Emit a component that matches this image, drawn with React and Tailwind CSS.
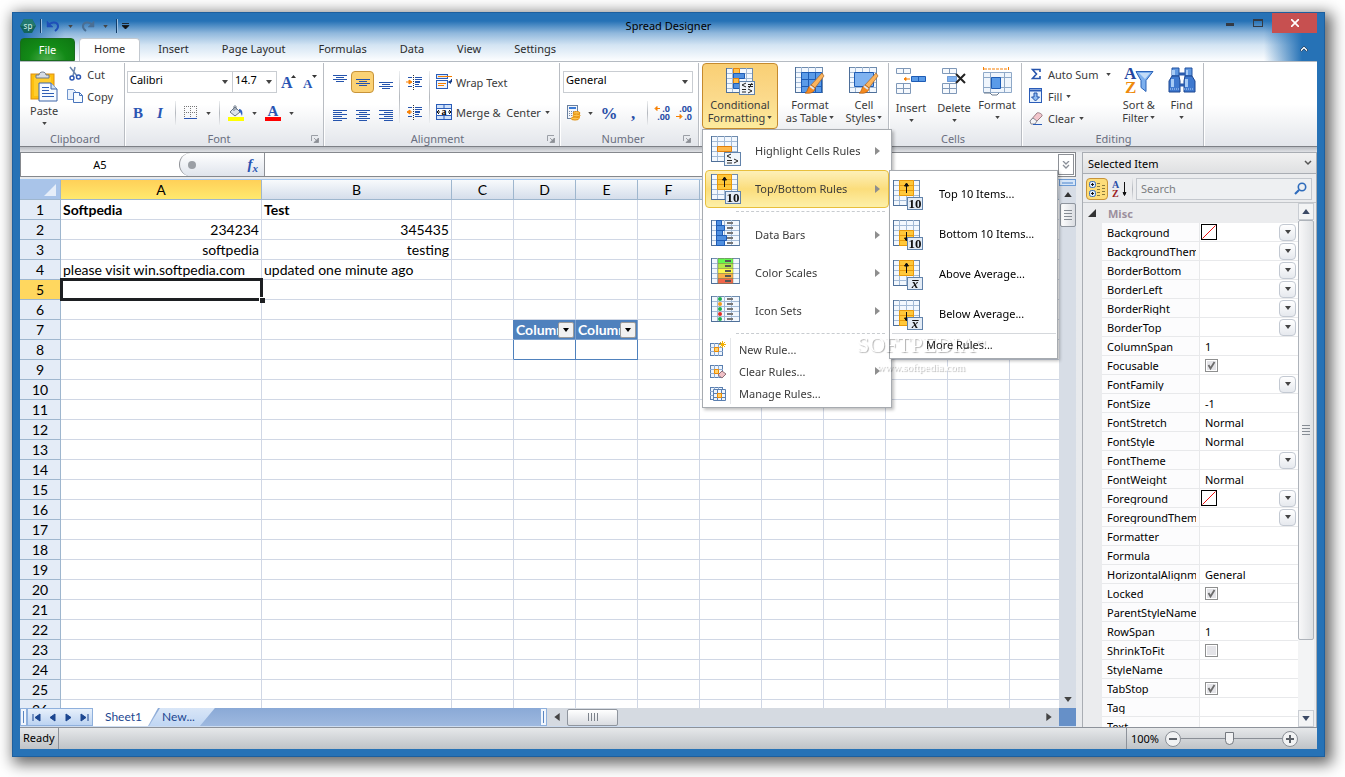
const Caret = ({ className = 'w-[5px] h-[3px] text-[#444]' }) => (
  <svg viewBox="0 0 6 4" className={`shrink-0 ${className}`} aria-hidden="true"><path d="M0 0h6L3 4z" fill="currentColor" /></svg>
);

const Sep = () => <span className="h-6 w-px bg-gradient-to-b from-[#eceef0] via-[#b4b8be] to-[#eceef0]" />;

/* ---------- quick access icons ---------- */

const Logo = () => (
  <svg viewBox="0 0 16 16" className="size-4">
    <path d="M4 1h8l4 7-4 7H4L0 8z" fill="#14655c" />
    <path d="M4 1h8l4 7H0z" fill="#22796f" />
    <text x="8" y="10.500" textAnchor="middle" fontSize="8" fill="#d5efe9">sp</text>
  </svg>
);

const Undo = ({ redo }) => (
  <svg viewBox="0 0 14 12" className="h-3 w-3.5">
    <g transform={redo ? 'translate(14 0) scale(-1 1)' : undefined} fill="none" stroke={redo ? '#4a6f94' : '#1f4fb8'}>
      <path d="M2 6C4 2 11 1 12 5.500c.5 2.500-1 4-3 5.500" strokeWidth="2" />
      <path d="M1 1v6h6z" fill={redo ? '#4a6f94' : '#1f4fb8'} strokeWidth=".5" />
    </g>
  </svg>
);

/* ---------- clipboard icons ---------- */

const PasteIcon = () => (
  <svg viewBox="0 0 28 31" className="h-[31px] w-7">
    <rect x="1" y="3" width="23" height="25" fill="#fdbf0f" stroke="#dd8f12" />
    <rect x="4" y="6" width="17" height="19" fill="#ffcd2e" />
    <path d="M6 7V4h3c0-4 7-4 7 0h3v3z" fill="#d6dde6" stroke="#6c7889" />
    <path d="M9 12h12l6 6v12H9z" fill="#f7fbff" stroke="#3c65a8" />
    <path d="M21 12v6h6" fill="#cfe0f5" stroke="#3c65a8" />
    <path d="M12 16.500h7M12 19.500h7M12 22.500h12M12 25.500h12" stroke="#2f5fb5" />
  </svg>
);

const CutIcon = () => (
  <svg viewBox="0 0 14 16" className="h-4 w-3.5" fill="none">
    <path d="M2 1l7 9M7 1L5 10" stroke="#6d88b0" strokeWidth="1.500" />
    <circle cx="4" cy="12" r="2" stroke="#2c57b4" strokeWidth="1.500" />
    <circle cx="10.500" cy="11" r="2" stroke="#2c57b4" strokeWidth="1.500" />
  </svg>
);

const CopyIcon = () => (
  <svg viewBox="0 0 16 14" className="h-3.5 w-4" stroke="#6f94cc">
    <path d="M.5.5h6l2 2v8h-8z" fill="#e9f1fc" />
    <path d="M6.500 3.500h6l3 3v7h-9z" fill="#f7fbff" stroke="#4673bb" />
    <path d="M12.500 3.500v3h3" fill="none" stroke="#4673bb" />
  </svg>
);

/* ---------- font icons ---------- */

const SizeIcon = ({ down }) => (
  <svg viewBox="0 0 16 16" className="size-4 overflow-visible">
    <text x="0" y="14" fontSize={down ? 13 : 16} fontWeight="bold" fill="#2a55b3" fontFamily="Liberation Serif, serif">A</text>
    <path d={down ? 'M9 1h5l-2.500 3z' : 'M10 4h5l-2.500-3z'} fill="#333" />
  </svg>
);

const BordersIcon = () => (
  <svg viewBox="0 0 14 14" className="size-3.5">
    <path d="M.5 0v12M6.500 0v12M12.500 0v12M0 .5h13M0 6.500h13" stroke="#777" strokeDasharray="1 1" />
    <path d="M0 12.500h13" stroke="#2a55b3" />
  </svg>
);

const FillColorIcon = () => (
  <svg viewBox="0 0 16 16" className="size-4">
    <path d="M2 7l5-5 5 5-5 4z" fill="#dce3ec" stroke="#6a7686" />
    <path d="M6 6V1.500c0-1 2-1 2 0V5" fill="none" stroke="#6a7686" />
    <path d="M11 4c3 0 4 3 3 7-1-2-1-3-3-5z" fill="#2f62c4" />
    <path d="M0 12h16v4H0z" fill="#ff0" />
  </svg>
);

const FontColorIcon = () => (
  <svg viewBox="0 0 16 16" className="size-4">
    <text x="8" y="11" textAnchor="middle" fontSize="15" fontWeight="bold" fill="#2a55b3" fontFamily="Liberation Serif, serif">A</text>
    <path d="M0 12h16v4H0z" fill="red" />
  </svg>
);

/* ---------- alignment icons ---------- */

const lineSets = {
  top: 'M0 1.500h14M3 3.500h8M0 5.500h14M3 7.500h8',
  middle: 'M0 5.500h14M3 7.500h8M0 9.500h14M3 11.500h8',
  bottom: 'M0 8.500h14M3 10.500h8M0 12.500h14M3 14.500h8',
  left: 'M0 2.500h14M0 4.500h9M0 6.500h14M0 8.500h9M0 10.500h14M0 12.500h9',
  center: 'M0 2.500h14M3 4.500h8M0 6.500h14M3 8.500h8M0 10.500h14M3 12.500h8',
  right: 'M0 2.500h14M5 4.500h9M0 6.500h14M5 8.500h9M0 10.500h14M5 12.500h9',
};

const LinesIcon = ({ kind }) => (
  <svg viewBox="0 0 14 16" className="h-4 w-3.5"><path d={lineSets[kind]} stroke="#2554ad" /></svg>
);

const IndentIcon = ({ out }) => (
  <svg viewBox="0 0 17 16" className="h-4 w-[17px]">
    <path d="M2 3.500h4M9 3.500h7M9 5.500h7M9 10.500h4M2 12.500h4M9 12.500h7" stroke="#2554ad" />
    <path d="M9 8h5" stroke="#2554ad" strokeWidth="2" />
    <path d="M7.500 1v15" stroke="#333" strokeDasharray="1 1" />
    <path d={out ? 'M6 8H3M4 6L1 8l3 2z' : 'M0 8h4M3 6l3 2-3 2z'} fill="#f77f00" stroke="#f77f00" />
  </svg>
);

const WrapIcon = () => (
  <svg viewBox="0 0 16 16" className="size-4">
    <rect x=".5" y=".5" width="11" height="4" fill="#dceafc" stroke="#2a5cb8" />
    <path d="M2 2.500h14" stroke="#f77f00" />
    <rect x=".5" y="6.500" width="11" height="8" fill="#eef5ff" stroke="#2a5cb8" />
    <path d="M2 9.500h8M2 11.500h6" stroke="#f77f00" />
    <path d="M15.500 5v3h-3" fill="none" stroke="#173f8a" />
    <path d="M15 6v4l-3-2z" fill="#173f8a" />
  </svg>
);

const MergeIcon = () => (
  <svg viewBox="0 0 16 16" className="size-4">
    <rect x=".5" y=".5" width="15" height="15" fill="#fff" stroke="#2a5cb8" />
    <path d="M1 1h14v3H1zM1 12h14v3H1z" fill="#cfe1fa" />
    <path d="M0 4.500h16M0 11.500h16M8 0v4M8 12v4" stroke="#2a5cb8" />
    <path d="M1 8h3M15 8h-3M3 6L1 8l2 2M13 6l2 2-2 2" fill="none" stroke="#111" />
    <text x="8" y="11" textAnchor="middle" fontSize="10" fontWeight="bold" fontFamily="Liberation Serif, serif">a</text>
  </svg>
);

/* ---------- number icons ---------- */

const CurrencyIcon = () => (
  <svg viewBox="0 0 16 16" className="size-4">
    <rect x="1.500" y=".5" width="10" height="13" fill="#f3f6fb" stroke="#69809f" />
    <path d="M3 2h7v2H3z" fill="#3b7bd6" />
    <path d="M3 6.500h7M3 8.500h7M3 10.500h7" stroke="#7c8da5" strokeDasharray="1 1" />
    <path d="M7 8h7v5H7z" fill="#f9a825" />
    <ellipse cx="10.500" cy="8" rx="3.500" ry="1.500" fill="#ffc34d" stroke="#e0900f" />
    <ellipse cx="10.500" cy="10.500" rx="3.500" ry="1.500" fill="#ffc34d" stroke="#e0900f" />
    <ellipse cx="9" cy="13.500" rx="4" ry="1.500" fill="#ffc34d" stroke="#e0900f" />
  </svg>
);

const DecimalIcon = ({ less }) => (
  <svg viewBox="0 0 16 16" className="size-4 overflow-visible" fontSize="9" fontWeight="bold" fill="#2a4fa8" fontFamily="Noto Sans, sans-serif">
    <text x="16" y="7" textAnchor="end">{less ? '.00' : '.0'}</text>
    <text x="16" y="15" textAnchor="end">{less ? '.0' : '.00'}</text>
    <path d={less ? 'M0 11.500h4M4 9.500l2 2-2 2z' : 'M6 3.500H2M3 1.500l-2 2 2 2z'} fill="#f77f00" stroke="#f77f00" />
  </svg>
);

/* ---------- sheet-shaped icons ---------- */

const Sheet = ({ w = 27, h = 25 }) => (
  <g>
    <rect x=".5" y=".5" width={w} height={h} fill="#f3f8fe" stroke="#6f8cae" />
    <path d={`M0 5.500h${w}M0 10.500h${w}M0 15.500h${w}M0 20.500h${w}M6.500 0v${h}M13.500 0v${h}M20.500 0v${h}`} stroke="#a3bad6" />
    <path d={`M.5 0v${h + 0.5}h${w}`} fill="none" stroke="#4e6f99" />
  </g>
);

const Badge = ({ children, italic }) => (
  <g>
    <rect x="14.500" y="17.500" width="15" height="12" fill="#e4ecf6" stroke="#6283ab" />
    <text x="22" y="28" textAnchor="middle" fontSize="13" fontWeight="bold" fontStyle={italic ? 'italic' : 'normal'} fill="#111" fontFamily="Liberation Serif, serif">{children}</text>
  </g>
);

const Operators = () => (
  <g>
    <rect x="13.500" y="16.500" width="16" height="13" fill="#f1f5fa" stroke="#6283ab" />
    <path d="M20 18l-4 2 4 2M16 24.500h5M16 27h5M23 23l4 2-4 2" fill="none" stroke="#222" />
  </g>
);

const Brush = () => (
  <g>
    <path d="M27 6l2 3-9 12-4-3z" fill="#fbb45c" stroke="#a6642a" strokeWidth=".7" />
    <path d="M16 18l4 3c0 4-4 6-10 5 3-1 2-6 6-8z" fill="#f58a1f" stroke="#a85812" strokeWidth=".7" />
    <path d="M15 19l4 3" stroke="#dfe5ec" strokeWidth="2" />
  </g>
);

const Icon30 = ({ children }) => <svg viewBox="0 0 30 30" className="size-[30px] shrink-0">{children}</svg>;

const CondFormatIcon = () => (
  <Icon30>
    <g transform="translate(1 1)">
      <Sheet w={26} h={24} />
      <path d="M7.500.5h6v5h-6z" fill="#ffc04d" stroke="#e8860a" />
      <path d="M7.500 5.500h11v5h-11z" fill="#4f8fe0" stroke="#1e5cb5" />
      <path d="M7.500 10.500h5v5h-5z" fill="#ffc04d" stroke="#e8860a" />
      <path d="M7.500 15.500h6v5h-6z" fill="#4f8fe0" stroke="#1e5cb5" />
      <rect x="13.500" y="13.500" width="15" height="13" fill="#f1f5fa" stroke="#6283ab" />
      <path d="M20 15l-4 2 4 2M16 21.500h4M16 24h4M22 16.500h5M22 18.500h5M26 15l-3 5M22 21l4 2-4 2" fill="none" stroke="#222" />
    </g>
  </Icon30>
);

const FormatTableIcon = () => (
  <Icon30>
    <Sheet w={27} h={25} />
    <path d="M6.500 5.500h20v20h-20z" fill="#5a9be8" stroke="#1e5cb5" />
    <path d="M7 12.500h20M7 19.500h20M13.500 5v20M20.500 5v20" stroke="#1e5cb5" />
    <Brush />
  </Icon30>
);

const CellStylesIcon = () => (
  <Icon30>
    <Sheet w={27} h={25} />
    <path d="M5.500 5.500h19v14h-19z" fill="#7fb2f0" stroke="#1e5cb5" />
    <Brush />
  </Icon30>
);

const CellBox = ({ y }) => (
  <path d={`M.5 ${y}h14v5h-14zM7.500 ${y}v5`} fill="#f6f9fd" stroke="#7f98b8" />
);

const InsertIcon = () => (
  <Icon30>
    <CellBox y={1.5} />
    <path d="M.5 16.500h14v10h-14zM7.500 16.500v10M.5 21.500h14" fill="#f6f9fd" stroke="#7f98b8" />
    <path d="M15.500 9.500h14v5h-14zM22.500 9.500v5" fill="#5a9be8" stroke="#1e5cb5" />
    <path d="M14 12H9M10 10.500L8 12l2 1.500z" fill="#f77f00" stroke="#f77f00" />
  </Icon30>
);

const DeleteIcon = () => (
  <Icon30>
    <g transform="translate(3 0)">
      <CellBox y={1.5} />
      <path d="M.5 16.500h14v10h-14zM7.500 16.500v10M.5 21.500h14" fill="#f6f9fd" stroke="#7f98b8" />
      <path d="M5.500 9.500h9v5h-9z" fill="#7fb2f0" stroke="#1e5cb5" strokeDasharray="1 1" />
      <path d="M14 7l9 9M23 7l-9 9" stroke="#222" strokeWidth="2" />
    </g>
  </Icon30>
);

const FormatIcon = () => (
  <Icon30>
    <path d="M1.500 0v4M26.500 0v4M2 2h25" stroke="#f77f00" strokeDasharray="3 1" />
    <path d="M1.500 5.500h28v20h-28zM2 10.500h27M2 20.500h27M8.500 6v20M22.500 6v20" fill="#eff5fc" stroke="#8fa9c8" />
    <path d="M9.500 10.500h9v11h-9z" fill="#5a9be8" stroke="#1e5cb5" />
    <path d="M2 26h6l2 2h5l2-2" fill="#fff" stroke="#68788c" />
  </Icon30>
);

/* ---------- editing icons ---------- */

const SumIcon = () => (
  <svg viewBox="0 0 14 14" className="size-3.5"><path d="M11 5V2.500H3.500l4 4.500-4 4.500H11V9" fill="none" stroke="#2554ad" strokeWidth="1.600" /></svg>
);

const FillIcon = () => (
  <svg viewBox="0 0 14 16" className="h-4 w-3.5">
    <rect x=".5" y=".5" width="12" height="14" fill="#e5f0fd" stroke="#2a5cb8" />
    <path d="M0 2.500h13" stroke="#2a5cb8" strokeWidth="2" />
    <path d="M5 5h3v4h2.500l-4 4-4-4H5z" fill="#8fbcf3" stroke="#1e50a8" />
  </svg>
);

const EraserIcon = () => (
  <svg viewBox="0 0 14 14" className="size-3.5">
    <path d="M1 10l7-8c1-1 6 1 5 3l-7 7H2z" fill="#f2c6cc" stroke="#9a7d84" />
    <path d="M1 10l3-3 4 3-2 3H2z" fill="#f4f4f6" stroke="#8b8b95" />
    <path d="M4 13.500h9" stroke="#2a5cb8" />
  </svg>
);

const SortFilterIcon = () => (
  <Icon30>
    <path d="M12 4.500h17l-7 9v11l-5-4v-7z" fill="#7db0ee" stroke="#2a62b8" />
    <path d="M15 6h11l-5 6z" fill="#c3dcf8" />
    <g fontFamily="Liberation Serif, serif" fontWeight="bold" fontSize="17">
      <text x="0" y="12" fill="#2346a0">A</text>
      <text x="1" y="26" fill="#ee8a0c">Z</text>
    </g>
  </Icon30>
);

const FindIcon = () => (
  <Icon30>
    <path d="M5 1h7v8H5zM18 1h7v8h-7z" fill="#5f97e0" stroke="#20509f" />
    <path d="M5 9h7l1 5v11H2V14zM18 9h7l3 5v11H17V14z" fill="#3f79cf" stroke="#1d4690" />
    <path d="M12 7h6M13 18h4" stroke="#2b5cae" strokeWidth="3" />
    <path d="M5 3h3v5H5zM19 3h2v5h-2zM4 12h3v8H4zM18 12h3v8h-3z" fill="#a7cbf5" />
    <path d="M3 22h10M17 22h10" stroke="#bcd6f6" strokeDasharray="1 1" />
  </Icon30>
);

/* ---------- menu icons ---------- */

const HighlightIcon = () => (
  <Icon30><Sheet w={26} h={25} /><path d="M6.500 10.500h14v5h-14z" fill="#ffb84a" stroke="#e07f0b" /><Operators /></Icon30>
);

const RankIcon = ({ down, avg }) => (
  <Icon30>
    <Sheet w={26} h={25} />
    <g transform={down ? 'translate(0 10)' : undefined}>
      <path d="M6.500 .5h14v15h-14zM6.500 5.500h14M6.500 10.500h14" fill="#ffc83a" stroke="#e89a0c" />
      <path d={down ? 'M13.500 2v9M11.500 8l2 3 2-3z' : 'M13.500 13V4M11.500 6l2-3 2 3z'} fill="#111" stroke="#111" />
    </g>
    <Badge italic={avg}>{avg ? 'x̅' : '10'}</Badge>
  </Icon30>
);

const marks = 'M16 3h6M16 8h6M16 13h6M16 18h6M16 23h6';

const DataBarsIcon = () => (
  <Icon30>
    <Sheet w={28} h={25} />
    <path d="M5.500.5h5v5h-5zM5.500 5.500h8v5h-8zM5.500 10.500h6v5h-6zM5.500 15.500h10v5h-10zM5.500 20.500h8v5h-8z" fill="#4f8fe0" stroke="#1e5cb5" />
    <path d={marks} stroke="#777" strokeWidth="2" />
  </Icon30>
);

const scaleColors = ['#62f84e', '#b5e84b', '#fbf94d', '#fbb04a', '#f2664b'];

const ColorScalesIcon = () => (
  <Icon30>
    <Sheet w={28} h={25} />
    {scaleColors.map((c, i) => <rect key={c} x="7" y={0.5 + i * 5} width="15" height="5" fill={c} stroke="#7a7a3a" strokeWidth=".4" />)}
    <path d="M14 3h6M14 8h6M14 13h6M14 18h6M14 23h6" stroke="#555" strokeWidth="2" />
  </Icon30>
);

const dotColors = ['#1fae4b', '#f59a1d', '#1fae4b', '#e42a22', '#1fae4b'];

const IconSetsIcon = () => (
  <Icon30>
    <Sheet w={28} h={25} />
    {dotColors.map((c, i) => <circle key={i} cx="9" cy={3 + i * 5} r="2" fill={c} />)}
    <path d={marks} stroke="#777" strokeWidth="2" />
  </Icon30>
);

const SmallRuleIcon = ({ kind }) => (
  <svg viewBox="0 0 16 16" className="size-4 shrink-0">
    <rect x=".5" y="2.500" width="12" height="12" fill="#eef5fd" stroke="#5a7fb0" />
    <path d="M0 6.500h13M0 10.500h13M4.500 2v13M8.500 2v13" stroke="#8fabd0" />
    <path d="M4.500 6.500h4v4h-4z" fill="#ffd36b" stroke="#f08a00" />
    {kind === 'new' && <path d="M12.500 0v7M9 3.500h7M10 1l5 5M15 1l-5 5" stroke="#f5b100" />}
    {kind === 'clear' && <path d="M8 12l4-4 4 3-4 4z" fill="#f0c0c6" stroke="#8d6f77" />}
    {kind === 'manage' && <path d="M3.500 4.500h12v11h-12zM3 8.500h12M3 12.500h12M7.500 4v11M11.500 4v11" fill="#eef5fd" stroke="#5a7fb0" />}
    {kind === 'manage' && <path d="M7.500 8.500h4v4h-4z" fill="#ffd36b" stroke="#f08a00" />}
  </svg>
);

/* ---------- ribbon building blocks ---------- */

function Group({ title, launcher, className = '', children }) {
  return (
    <section className={`flex shrink-0 flex-col border-r border-[#b9bdc3] shadow-[1px_0_0_#fff] ${className}`}>
      <div className="flex flex-1">{children}</div>
      <div className="flex h-[15px] items-center pr-1 text-[#6a6f80]">
        <h2 className="flex-1 text-center">{title}</h2>
        {launcher && (
          <button aria-label={`${title} options`}>
            <svg viewBox="0 0 8 8" className="size-2"><path d="M.5 6V.5H7" fill="none" stroke="#9b9fa6" /><path d="M3 3l3 3M7.500 3v4.500H3z" fill="#8b8f96" stroke="#8b8f96" strokeWidth=".8" /></svg>
          </button>
        )}
      </div>
    </section>
  );
}

function BigButton({ icon, lines, caretBelow, className = '' }) {
  return (
    <button className={`flex flex-col items-center ${className}`}>
      {icon}
      {lines.map((line, i) => (
        <span key={line} className="flex h-[13px] items-center gap-0.5 whitespace-nowrap">
          {line}
          {!caretBelow && i === lines.length - 1 && <Caret />}
        </span>
      ))}
      {caretBelow && <span className="flex h-[13px] items-center"><Caret /></span>}
    </button>
  );
}

function SmallButton({ icon, label, caret }) {
  return (
    <button className="flex h-[22px] items-center gap-1 whitespace-nowrap">
      <span className="flex w-4 justify-center">{icon}</span>
      {label}
      {caret && <Caret />}
    </button>
  );
}

function Combo({ label, value, className = '' }) {
  return (
    <div className={`relative h-[22px] border border-[#c9cdd2] bg-white ${className}`}>
      <select aria-label={label} className="block h-3.5 w-full appearance-none bg-transparent pl-0.5 text-black outline-none">
        <option>{value}</option>
      </select>
      <Caret className="pointer-events-none absolute right-1 top-2 h-1 w-1.5 text-[#444]" />
    </div>
  );
}

const tool = 'flex h-[22px] items-center justify-center';

/* ---------- conditional formatting menu ---------- */

const Arrow = () => <svg viewBox="0 0 5 8" className="h-2 w-[5px]"><path d="M0 0l5 4-5 4z" fill="#8e8e8e" /></svg>;

const subItems = [
  ['Top 10 Items...', <RankIcon />],
  ['Bottom 10 Items...', <RankIcon down />],
  ['Above Average...', <RankIcon avg />],
  ['Below Average...', <RankIcon down avg />],
];

function SubMenu() {
  return (
    <div role="menu" className="absolute left-full top-0 w-[169px] border border-[#a7abb0] bg-white pt-0.5 text-black shadow-[2px_2px_3px_rgba(0,0,0,0.25)]">
      {subItems.map(([label, icon]) => (
        <button key={label} role="menuitem" className="flex h-10 w-full items-center gap-4 whitespace-nowrap pl-[3px] [&>svg]:mt-1">{icon}{label}</button>
      ))}
      <button role="menuitem" className="mx-0.5 block h-[25px] w-[164px] border-t border-[#d5d8dc] pb-1 pl-[34px] text-left text-[#222]">More Rules...</button>
    </div>
  );
}

function MenuItem({ label, icon, active, children }) {
  return (
    <div className="relative">
      <button role="menuitem" className={`flex h-[38px] w-full items-center rounded-sm border pb-px pl-[5px] pr-2 ${active ? 'border-[#e8bf3c] bg-gradient-to-b from-[#fdf0b8] via-[#fbdd7b] to-[#fdf0a8]' : 'border-transparent'}`}>
        {icon}
        <span className="ml-3.5 flex-1 whitespace-nowrap text-left">{label}</span>
        <Arrow />
      </button>
      {children}
    </div>
  );
}

const MenuRule = () => (
  <div className="flex h-2 pl-[23px] pr-1">
    <div className="mt-[3px] ml-2 flex-1 border-t border-dashed border-[#c8ccd0]" />
  </div>
);

function FormattingMenu() {
  return (
    <div role="menu" className="absolute left-0 top-full w-[190px] border border-[#a7abb0] bg-white px-0.5 pb-[3px] pt-0.5 text-[#3b3b3b] shadow-[2px_2px_3px_rgba(0,0,0,0.25)]">
      <MenuItem label="Highlight Cells Rules" icon={<HighlightIcon />} />
      <MenuItem label="Top/Bottom Rules" icon={<RankIcon />} active><SubMenu /></MenuItem>
      <MenuRule />
      <MenuItem label="Data Bars" icon={<DataBarsIcon />} />
      <MenuItem label="Color Scales" icon={<ColorScalesIcon />} />
      <MenuItem label="Icon Sets" icon={<IconSetsIcon />} />
      <MenuRule />
      {[['New Rule...', 'new'], ['Clear Rules...', 'clear'], ['Manage Rules...', 'manage']].map(([label, kind]) => (
        <button key={kind} role="menuitem" className="flex h-[22px] w-full items-center pl-[5px] pr-[9px]">
          <SmallRuleIcon kind={kind} />
          <span className="ml-1 h-full border-l border-[#e4e6e9]" />
          <span className="ml-2 flex-1 text-left">{label}</span>
          {kind === 'clear' && <Arrow />}
        </button>
      ))}
      <div className="pointer-events-none absolute left-[154px] top-[201px] whitespace-nowrap text-center text-white mix-blend-multiply [text-shadow:1px_1px_1px_rgba(0,0,0,0.3)]">
        <p className="font-['Liberation_Serif',serif] text-[22px] leading-[28px]">SOFTPEDIA<sup className="text-[10px]">™</sup></p>
        <p className="font-['Liberation_Serif',serif] text-[11px] leading-4">www.softpedia.com</p>
      </div>
    </div>
  );
}

/* ---------- window chrome ---------- */

const tabs = ['Insert', 'Page Layout', 'Formulas', 'Data', 'View', 'Settings'];

function TitleBar() {
  return (
    <header className="-mx-[7px] bg-[linear-gradient(to_right,#2672b6_10px,transparent_52px),linear-gradient(to_left,#2672b6_22px,transparent_60px),linear-gradient(to_bottom,#2672b6_8px,#8fb7dc_20px,#d3e4f3_32px,#fdfeff_48px)] px-[7px]">
      <div className="flex h-[25px] items-start">
        <div className="flex h-[26px] flex-1 items-center gap-1">
          <Logo />
          <span className="h-3.5 w-0.5 border-l border-[#123d69] bg-[#9cc1e3]" />
          <button aria-label="Undo"><Undo /></button>
          <span className="px-1"><Caret /></span>
          <button aria-label="Redo"><Undo redo /></button>
          <span className="px-1"><Caret /></span>
          <span className="h-3.5 w-0.5 border-l border-[#123d69] bg-[#9cc1e3]" />
          <button aria-label="Customize toolbar"><svg viewBox="0 0 8 8" className="size-2"><path d="M0 1.500h7M0 3.500h7L3.500 7z" fill="#111" stroke="#111" strokeWidth=".8" /></svg></button>
        </div>
        <h1 className="leading-[26px]">Spread Designer</h1>
        <div className="flex flex-1 justify-end">
          <button aria-label="Minimize" className="flex w-7 justify-center pt-2.5"><span className="h-[3px] w-2 bg-[#333a44]" /></button>
          <button aria-label="Maximize" className="flex w-7 justify-center pt-1.5"><span className="h-2 w-2.5 border border-t-2 border-[#333a44]" /></button>
          <button aria-label="Close" className="flex h-5 w-[45px] items-center justify-center bg-[#c75050]">
            <svg viewBox="0 0 8 8" className="size-2"><path d="M0 0l8 8M8 0L0 8" stroke="#fff" strokeWidth="1.700" /></svg>
          </button>
        </div>
      </div>
      <nav className="flex h-[23px] gap-[3px] text-[#2b2b2b]">
        <button className="mr-px h-[23px] w-[55px] rounded-t-sm border border-[#1a6b1e] bg-[radial-gradient(ellipse_at_bottom,#4cae4c,#138a17_50%,#0e7612)] text-white">File</button>
        <button className="h-[23px] rounded-t-sm border border-b-0 border-[#c3c9d0] bg-white px-[14px] pb-1">Home</button>
        {tabs.map((t) => <button key={t} className="h-[23px] px-[15px] pb-0.5">{t}</button>)}
        <button aria-label="Collapse ribbon" className="ml-auto mr-2 pb-1">
          <svg viewBox="0 0 10 8" className="h-2 w-2.5"><path d="M1 6l4-4 4 4-1.500 1.500L5 5 2.500 7.500z" fill="#dce7f2" stroke="#33506f" /></svg>
        </button>
      </nav>
    </header>
  );
}

function Ribbon() {
  return (
    <div className="relative z-10 flex h-[86px] border-b border-t border-b-[#7d8086] border-t-[#b5bbc2] bg-gradient-to-b from-white from-50% to-[#e3e6eb] pt-px text-[#3b3b3b]">
      <Group title="Clipboard" className="w-[105px] pl-2.5">
        <BigButton icon={<span className="flex h-9 items-center"><PasteIcon /></span>} lines={['Paste']} caretBelow className="pt-[5px]" />
        <div className="flex flex-col pl-[9px]">
          <SmallButton icon={<CutIcon />} label="Cut" />
          <SmallButton icon={<CopyIcon />} label="Copy" />
        </div>
      </Group>

      <Group title="Font" launcher className="w-[199px] pl-0.5">
        <div className="flex flex-1 flex-col gap-2 pt-2">
          <div className="flex items-center">
            <Combo label="Font" value="Calibri" className="w-[106px]" />
            <Combo label="Font size" value="14.7" className="-ml-px w-[45px]" />
            <button aria-label="Grow font" className="ml-1"><SizeIcon /></button>
            <button aria-label="Shrink font" className="ml-1.5"><SizeIcon down /></button>
          </div>
          <div className="flex items-center gap-2 pl-1 font-['Liberation_Serif',serif] text-[15px] font-bold text-[#2a55b3]">
            <button className={`w-3.5 ${tool}`}>B</button>
            <button className={`w-3.5 italic ${tool}`}>I</button>
            <Sep />
            <button aria-label="Borders" className={tool}><BordersIcon /></button>
            <Caret />
            <Sep />
            <button aria-label="Fill color" className={tool}><FillColorIcon /></button>
            <Caret />
            <button aria-label="Font color" className={tool}><FontColorIcon /></button>
            <Caret />
          </div>
        </div>
      </Group>

      <Group title="Alignment" launcher className="w-[236px] pl-1">
        <div className="grid grid-cols-[23px_23px_23px] gap-y-2 pt-2">
          {['top', 'middle', 'bottom', 'left', 'center', 'right'].map((k) => (
            <button key={k} aria-label={`Align ${k}`} className={`${tool} ${k === 'middle' ? 'rounded-sm border border-[#c79339] bg-[#fbd275]' : ''}`}><LinesIcon kind={k} /></button>
          ))}
        </div>
        <div className="my-2 ml-0.5 w-px bg-gradient-to-b from-[#eceef0] via-[#b4b8be] to-[#eceef0]" />
        <div className="flex flex-col gap-2 px-1.5 pt-2">
          <button aria-label="Increase indent" className={tool}><IndentIcon /></button>
          <button aria-label="Decrease indent" className={tool}><IndentIcon out /></button>
        </div>
        <div className="my-2 w-px bg-gradient-to-b from-[#eceef0] via-[#b4b8be] to-[#eceef0]" />
        <div className="flex flex-col gap-2 pl-1.5 pt-2">
          <SmallButton icon={<WrapIcon />} label="Wrap Text" />
          <SmallButton icon={<MergeIcon />} label={<>Merge &amp;&nbsp; Center</>} caret />
        </div>
      </Group>

      <Group title="Number" launcher className="w-[139px] px-[3px]">
        <div className="flex flex-1 flex-col gap-2 pt-2">
          <Combo label="Number format" value="General" className="w-[130px]" />
          <div className="flex items-center gap-1.5 pl-[3px] font-['Liberation_Serif',serif] text-[17px] font-bold text-[#2a4fa8]">
            <button aria-label="Currency" className={tool}><CurrencyIcon /></button>
            <Caret />
            <button className={`w-5 ${tool}`}>%</button>
            <button className={`w-4 ${tool}`}>,</button>
            <Sep />
            <button aria-label="Increase decimal" className={tool}><DecimalIcon /></button>
            <button aria-label="Decrease decimal" className={tool}><DecimalIcon less /></button>
          </div>
        </div>
      </Group>

      <Group title="Styles" className="w-[190px] pl-[3px]">
        <div className="relative h-[66px] w-[76px]">
          <BigButton icon={<CondFormatIcon />} lines={['Conditional', 'Formatting']} className="h-[66px] w-[76px] rounded-sm border border-[#c58a2e] bg-gradient-to-b from-[#f9cf74] via-[#fbd98a] to-[#fdeb9d] pt-[3px] [&>svg]:mb-px" />
          <FormattingMenu />
        </div>
        <BigButton icon={<FormatTableIcon />} lines={['Format', 'as Table']} className="w-[64px] pt-1 [&>svg]:mb-px" />
        <BigButton icon={<CellStylesIcon />} lines={['Cell', 'Styles']} className="w-[44px] pt-1 [&>svg]:mb-px" />
      </Group>

      <Group title="Cells" className="w-[133px]">
        <BigButton icon={<InsertIcon />} lines={['Insert']} caretBelow className="w-[44px] pt-1 [&>svg]:mb-1" />
        <BigButton icon={<DeleteIcon />} lines={['Delete']} caretBelow className="w-[42px] pt-1 [&>svg]:mb-1" />
        <BigButton icon={<FormatIcon />} lines={['Format']} caretBelow className="w-[44px] pt-1 [&>svg]:mb-px" />
      </Group>

      <Group title="Editing" className="w-[182px] pl-1.5">
        <div className="flex flex-col">
          <SmallButton icon={<SumIcon />} label={<span className="pr-1">Auto Sum</span>} caret />
          <SmallButton icon={<FillIcon />} label="Fill" caret />
          <SmallButton icon={<EraserIcon />} label="Clear" caret />
        </div>
        <BigButton icon={<SortFilterIcon />} lines={['Sort &', 'Filter']} className="ml-1.5 w-[44px] pt-1 [&>svg]:mb-px" />
        <BigButton icon={<FindIcon />} lines={['Find']} caretBelow className="w-[44px] pt-1 [&>svg]:mb-px" />
      </Group>
    </div>
  );
}

/* ---------- spreadsheet ---------- */

function FormulaBar() {
  return (
    <div className="flex h-[25px] border border-[#85888d] bg-white">
      <input aria-label="Name box" defaultValue="A5" className="w-[158px] bg-white text-center text-black outline-none" />
      <button className="flex w-[86px] items-center justify-between rounded-l-full border-l border-r border-[#8d9096] bg-gradient-to-b from-white to-[#dfe4ec] pl-2 pr-1">
        <span className="size-2 rounded-full bg-[#9b9fa5]" />
        <span className="pr-0.5 font-['Liberation_Serif',serif] text-[15px] font-bold italic text-[#2a55b3]">f<sub className="text-[11px]">x</sub></span>
      </button>
      <input aria-label="Formula" className="min-w-0 flex-1 outline-none" />
      <button aria-label="Expand formula bar" className="m-px flex w-4 items-center justify-center border border-[#8d9096]">
        <svg viewBox="0 0 8 8" className="size-2"><path d="M1 0l3 3 3-3M1 4l3 3 3-3" fill="none" stroke="#8a8f98" strokeWidth="1.300" /></svg>
      </button>
    </div>
  );
}

const columns = 'ABCDEFGHIJKLM'.split('');
const rowNumbers = Array.from({ length: 26 }, (_, i) => i + 1);

const cells = {
  A1: { text: 'Softpedia', cls: 'font-bold' },
  B1: { text: 'Test', cls: 'font-bold' },
  A2: { text: '234234', cls: 'text-right' },
  B2: { text: '345435', cls: 'text-right' },
  A3: { text: 'softpedia', cls: 'text-right' },
  B3: { text: 'testing', cls: 'text-right' },
  A4: { text: 'please visit win.softpedia.com' },
  B4: { text: 'updated one minute ago' },
  C7: { line: 'border-b-[#d0d7e5] border-r-[#4f81bd]' },
  C8: { line: 'border-b-[#d0d7e5] border-r-[#4f81bd]' },
  D8: { line: 'border-[#4f81bd]' },
  E8: { line: 'border-[#4f81bd]' },
};

function Cell({ id }) {
  if (id === 'A5') {
    return (
      <td className="relative border-b border-r border-[#d0d7e5] p-0">
        <span className="absolute -bottom-0.5 -left-px -right-0.5 -top-0.5 z-[1] border-[3px] border-[#1d1f22]" />
        <span className="absolute -bottom-1 -right-1 z-[1] size-[6px] border-l border-t border-white bg-[#1d1f22]" />
      </td>
    );
  }
  if (id === 'D7' || id === 'E7') {
    return (
      <td className="border-b border-r border-[#7ba0cd] bg-[#4f81bd] p-0 font-bold text-white">
        <div className="flex h-[19px] items-center">
          <span className="min-w-0 flex-1 overflow-hidden pl-0.5">Column{id === 'D7' ? 1 : 2}</span>
          <button aria-label="Filter" className="mr-px flex size-4 shrink-0 items-center justify-center rounded-xs border border-[#9a9a9a] bg-[#f1f1f1]"><Caret className="h-1 w-2 text-black" /></button>
        </div>
      </td>
    );
  }
  const { text, cls = '', line = 'border-[#d0d7e5]' } = cells[id] || {};
  return <td className={`whitespace-nowrap border-b border-r px-0.5 py-0 ${line} ${cls}`}>{text}</td>;
}

function Grid() {
  return (
    <div className="min-w-0 flex-1 overflow-hidden border-t border-[#a5c7ef] bg-white">
      <table className="w-[1114px] table-fixed border-separate border-spacing-0 font-[Lato,sans-serif] text-[14px] leading-[19px] text-black">
        <colgroup>
          <col className="w-[41px]" />
          <col className="w-[201px]" />
          <col className="w-[190px]" />
          {columns.slice(2).map((c) => <col key={c} className="w-[62px]" />)}
        </colgroup>
        <thead>
          <tr className="h-5">
            <th className="border-b border-r border-[#9eb6ce] bg-[#a9c4e9] p-0">
              <svg viewBox="0 0 12 12" className="ml-auto mr-1 size-3"><path d="M12 0v12H0z" fill="#e6eef9" /></svg>
            </th>
            {columns.map((c) => (
              <th key={c} className={`border-b border-r border-[#9eb6ce] bg-gradient-to-b p-0 font-normal ${c === 'A' ? 'from-[#ffd058] to-[#ffe96e]' : 'from-[#f8fafc] to-[#d5deeb]'}`}>{c}</th>
            ))}
          </tr>
        </thead>
        <tbody>
          {rowNumbers.map((r) => (
            <tr key={r} className="h-5">
              <th className={`border-b border-r border-[#9eb6ce] p-0 font-normal ${r === 5 ? 'bg-[#ffd75f]' : 'bg-[#e4ecf7]'}`}>{r}</th>
              {columns.map((c) => <Cell key={c} id={c + r} />)}
            </tr>
          ))}
        </tbody>
      </table>
    </div>
  );
}

const Grip = () => <span className="flex w-[7px] justify-center border border-[#8fb0dc] bg-[#f1f6fd] py-0.5"><span className="w-px bg-[#5a86c2]" /></span>;

const navPaths = ['M1 1v7M8 1v7L3 4.500z', 'M7 1v7L2 4.500z', 'M2 1v7l5-3.500z', 'M8 1v7M1 1v7l5-3.500z'];

function SheetTabs() {
  return (
    <div className="flex h-[19px] border-b border-[#cddcf0] bg-[#d5dae1]">
      <div className="flex w-[520px] bg-gradient-to-b from-[#8aa9d6] to-[#9eb9e0]">
        <Grip />
        <div className="flex w-[66px] items-center justify-around border border-[#8fb0dc] bg-gradient-to-b from-[#e7f0fb] to-[#bcd3f1]">
          {navPaths.map((d, i) => (
            <button key={d} aria-label={['First', 'Previous', 'Next', 'Last'][i]}><svg viewBox="0 0 9 9" className="size-[9px]"><path d={d} fill="#1c4690" stroke="#1c4690" /></svg></button>
          ))}
        </div>
        <div className="flex font-[Lato,sans-serif] text-[12px] leading-[18px] text-[#1c4690]">
          <button className="bg-white pl-3 pr-4 [clip-path:polygon(0_0,100%_0,calc(100%-10px)_100%,0_100%)]">Sheet1</button>
          <button className="-ml-[9px] bg-gradient-to-b from-[#d9e6f7] to-[#c0d6f3] pl-[13px] pr-5 [clip-path:polygon(11px_0,100%_0,calc(100%-15px)_100%,0_100%)]">New...</button>
        </div>
      </div>
      <div className="flex min-w-0 flex-1 items-center">
        <span className="flex self-stretch"><Grip /></span>
        <Caret className="mx-1.5 h-1.5 w-2 rotate-90 text-[#444]" />
        <div className="flex h-[17px] w-[51px] items-center justify-center gap-0.5 rounded-xs border border-[#8f959e] bg-gradient-to-b from-white to-[#d9dce1]">
          {[0, 1, 2, 3].map((i) => <span key={i} className="h-2 w-px bg-[#7c828b]" />)}
        </div>
        <Caret className="ml-auto mr-1.5 h-1.5 w-2 -rotate-90 text-[#444]" />
        <span className="w-[17px] self-stretch bg-[#6690c8]" />
      </div>
    </div>
  );
}

const ThumbLines = ({ n = 4 }) => (
  <span className="flex flex-col gap-0.5">{Array.from({ length: n }, (_, i) => <span key={i} className="h-px w-2 bg-[#868c94]" />)}</span>
);

function Workbook() {
  return (
    <main className="flex min-w-0 flex-1 flex-col gap-0.5">
      <FormulaBar />
      <div className="flex min-h-0 flex-1 flex-col">
        <div className="flex min-h-0 flex-1">
          <Grid />
          <div className="flex w-[17px] flex-col items-center bg-[#d7dde6]">
            <span className="flex h-[7px] w-full items-center border border-[#6c9bd5] bg-[#d5e5f8] px-0.5"><span className="h-0.5 w-full bg-[#8fb4e2]" /></span>
            <Caret className="my-1.5 h-[5px] w-2 rotate-180 text-[#333]" />
            <span className="flex h-6 w-4 items-center justify-center rounded-xs border border-[#8f959e] bg-gradient-to-r from-white to-[#dadde2]"><ThumbLines /></span>
            <Caret className="mb-1.5 mt-auto h-[5px] w-2 text-[#444]" />
          </div>
        </div>
        <SheetTabs />
      </div>
    </main>
  );
}

/* ---------- property panel ---------- */

const properties = [
  ['Background', 'swatch', true],
  ['BackgroundThemeColor', '', true],
  ['BorderBottom', '', true],
  ['BorderLeft', '', true],
  ['BorderRight', '', true],
  ['BorderTop', '', true],
  ['ColumnSpan', '1'],
  ['Focusable', 'on'],
  ['FontFamily', '', true],
  ['FontSize', '-1'],
  ['FontStretch', 'Normal'],
  ['FontStyle', 'Normal'],
  ['FontTheme', '', true],
  ['FontWeight', 'Normal'],
  ['Foreground', 'swatch', true],
  ['ForegroundThemeColor', '', true],
  ['Formatter', ''],
  ['Formula', ''],
  ['HorizontalAlignment', 'General'],
  ['Locked', 'on'],
  ['ParentStyleName', ''],
  ['RowSpan', '1'],
  ['ShrinkToFit', 'off'],
  ['StyleName', ''],
  ['TabStop', 'on'],
  ['Tag', ''],
  ['Text', ''],
];

function PropertyValue({ name, value }) {
  if (value === 'swatch') {
    return (
      <svg viewBox="0 0 16 16" className="ml-px size-4"><rect x=".5" y=".5" width="15" height="15" fill="#fff" stroke="#000" /><path d="M1.500 14.500l13-13" stroke="#e11" /></svg>
    );
  }
  if (value === 'on' || value === 'off') {
    return (
      <span className="relative ml-[5px] flex size-[13px]">
        <input type="checkbox" aria-label={name} defaultChecked={value === 'on'} className="peer size-[13px] appearance-none border border-[#8e8f8f] bg-[#e4e4e8] shadow-[inset_0_0_0_1px_#fff]" />
        <svg viewBox="0 0 13 13" className="pointer-events-none absolute inset-0 hidden peer-checked:block"><path d="M3.500 6l2 3.500 4-6.500" fill="none" stroke="#6c6c6c" strokeWidth="1.800" /></svg>
      </span>
    );
  }
  return <span className="pl-[5px]">{value}</span>;
}

function PropertyPanel() {
  return (
    <aside className="flex w-[235px] shrink-0 flex-col border border-b-0 border-[#a9adb3] bg-[#ebecee] text-black">
      <div className="flex h-[21px] items-center justify-between border-b border-[#a9adb3] bg-gradient-to-b from-[#f1f1f1] to-[#dfe0e2] pl-[5px] pr-1">
        <h2>Selected Item</h2>
        <svg viewBox="0 0 8 6" className="h-1.5 w-2"><path d="M1 1l3 3 3-3" fill="none" stroke="#555" strokeWidth="1.500" /></svg>
      </div>
      <div className="flex h-[29px] shrink-0 items-center border-b border-[#c3c6ca] pl-[3px] pr-1 pt-px">
        <button aria-label="Categorized" className="flex size-[22px] items-center justify-center rounded-sm border border-[#c79339] bg-[#fddd79]">
          <svg viewBox="0 0 18 18" className="size-[18px]">
            <rect x="1.500" y="1.500" width="6" height="6" rx="2" fill="#dbe9fb" stroke="#3c6fb6" />
            <rect x="1.500" y="10.500" width="6" height="6" rx="2" fill="#dbe9fb" stroke="#3c6fb6" />
            <path d="M3 4.500h3M4.500 3v3M3 13.500h3M4.500 12v3" stroke="#111" />
            <path d="M9 3.500h3M9 6.500h3M9 9.500h3M9 12.500h3M9 15.500h3M14 5.500h3M14 8.500h3M14 11.500h3M14 14.500h3" stroke="#8a7a3c" />
          </svg>
        </button>
        <button aria-label="Alphabetical" className="px-1">
          <svg viewBox="0 0 16 18" className="h-[18px] w-4" fontFamily="Liberation Serif, serif" fontWeight="bold" fontSize="10">
            <text x="0" y="8" fill="#2a4fa8">A</text>
            <text x="0" y="17" fill="#9b1c1c">Z</text>
            <path d="M12.500 2v12M11 12.500l1.500 3 1.500-3z" stroke="#111" />
          </svg>
        </button>
        <Sep />
        <label className="ml-[3px] flex h-[22px] min-w-0 flex-1 items-center border border-[#c3c7cd] bg-[#eef0f2] px-1">
          <input type="text" placeholder="Search" aria-label="Search properties" className="min-w-0 flex-1 bg-transparent outline-none placeholder:text-[#7b7d80]" />
          <svg viewBox="0 0 13 13" className="size-[13px]" fill="none" stroke="#2f6cbc"><circle cx="8" cy="5" r="3.700" strokeWidth="1.600" /><path d="M5 8l-4 4" strokeWidth="2.200" /></svg>
        </label>
      </div>
      <div className="flex min-h-0 flex-1">
        <div className="h-0 min-h-full min-w-0 flex-1 overflow-hidden pl-px">
          <table className="w-full table-fixed border-separate border-spacing-0">
            <colgroup><col className="w-[18px]" /><col className="w-[98px]" /><col /></colgroup>
            <tbody>
              <tr className="h-5">
                <td className="p-0 pl-1"><svg viewBox="0 0 8 8" className="size-2"><path d="M8 0v8H0z" fill="#333" /></svg></td>
                <th colSpan={2} className="p-0 pl-1.5 text-left font-bold text-[#9c8f9d]">Misc</th>
              </tr>
              {properties.map(([name, value, drop]) => (
                <tr key={name} className="h-[19px]">
                  <td className="p-0" />
                  <th className="overflow-hidden whitespace-nowrap border-b border-r border-[#e8e9eb] bg-[#fcfcfd] p-0 pl-[5px] text-left font-normal"><div className="mr-[3px] overflow-hidden">{name}</div></th>
                  <td className="border-b border-[#e8e9eb] bg-white p-0">
                    <div className="flex h-[18px] items-center">
                      <PropertyValue name={name} value={value} />
                      {drop && (
                        <button aria-label={`${name} options`} className="ml-auto mr-0.5 flex size-[17px] items-center justify-center rounded-sm border border-[#c3c9d2] bg-gradient-to-b from-white to-[#e6e9ee]"><Caret className="h-1 w-1.5 text-[#444]" /></button>
                      )}
                    </div>
                  </td>
                </tr>
              ))}
            </tbody>
          </table>
        </div>
        <div className="mr-0.5 flex w-4 flex-col bg-[#f3f4f5]">
          <span className="flex h-[17px] items-center justify-center border border-[#c9cdd3]"><Caret className="h-[5px] w-2 rotate-180 text-[#3c4a66]" /></span>
          <span className="flex flex-[6] items-center justify-center rounded-xs border border-[#aeb3ba] bg-gradient-to-r from-[#f8f8f9] to-[#dfe1e4]"><ThumbLines /></span>
          <span className="flex-1" />
          <span className="flex h-[17px] items-center justify-center border border-[#c9cdd3]"><Caret className="h-[5px] w-2 text-[#3c4a66]" /></span>
        </div>
      </div>
    </aside>
  );
}

function StatusBar() {
  return (
    <footer className="flex h-[22px] items-center border-t border-[#8d929a] bg-gradient-to-b from-[#e6e8ea] to-[#bfc3c7] text-black">
      <span className="h-full border-r border-[#8d929a] pl-[3px] pr-[3px] leading-5">Ready</span>
      <div className="ml-auto flex h-full items-center border-l border-[#8d929a] pl-1 pr-[19px]">
        <span>100%</span>
        <button aria-label="Zoom out" className="ml-1.5 flex size-4 items-center justify-center rounded-full border border-[#8a8f96] bg-[#f1f2f3]"><span className="h-0.5 w-2 bg-[#5c6168]" /></button>
        <input
          type="range"
          aria-label="Zoom"
          defaultValue="48"
          className="h-px w-[101px] appearance-none bg-[#8a8f96] [&::-webkit-slider-thumb]:h-[13px] [&::-webkit-slider-thumb]:w-[9px] [&::-webkit-slider-thumb]:appearance-none [&::-webkit-slider-thumb]:rounded-b-full [&::-webkit-slider-thumb]:border [&::-webkit-slider-thumb]:border-[#74797f] [&::-webkit-slider-thumb]:bg-[#f1f2f3]"
        />
        <button aria-label="Zoom in" className="flex size-4 items-center justify-center rounded-full border border-[#8a8f96] bg-[#f1f2f3]">
          <svg viewBox="0 0 8 8" className="size-2"><path d="M0 4h8M4 0v8" stroke="#5c6168" strokeWidth="2" /></svg>
        </button>
      </div>
    </footer>
  );
}

export default function App() {
  return (
    <div className="h-screen overflow-hidden bg-white pb-5 pl-3 pr-5 pt-3 font-['Noto_Sans',sans-serif] text-[11px] leading-[13px] text-black">
      <div className="flex h-full flex-col border border-[#1d5f9e] bg-[#2672b6] px-[7px] pb-[7px] shadow-[4px_4px_14px_3px_rgba(0,0,0,0.6)]">
        <TitleBar />
        <Ribbon />
        <div className="flex min-h-0 flex-1 gap-[6px] bg-gradient-to-b from-[#b9bcc2] to-[#e8eaed] to-[6px] pt-[5px]">
          <Workbook />
          <PropertyPanel />
        </div>
        <StatusBar />
      </div>
    </div>
  );
}
